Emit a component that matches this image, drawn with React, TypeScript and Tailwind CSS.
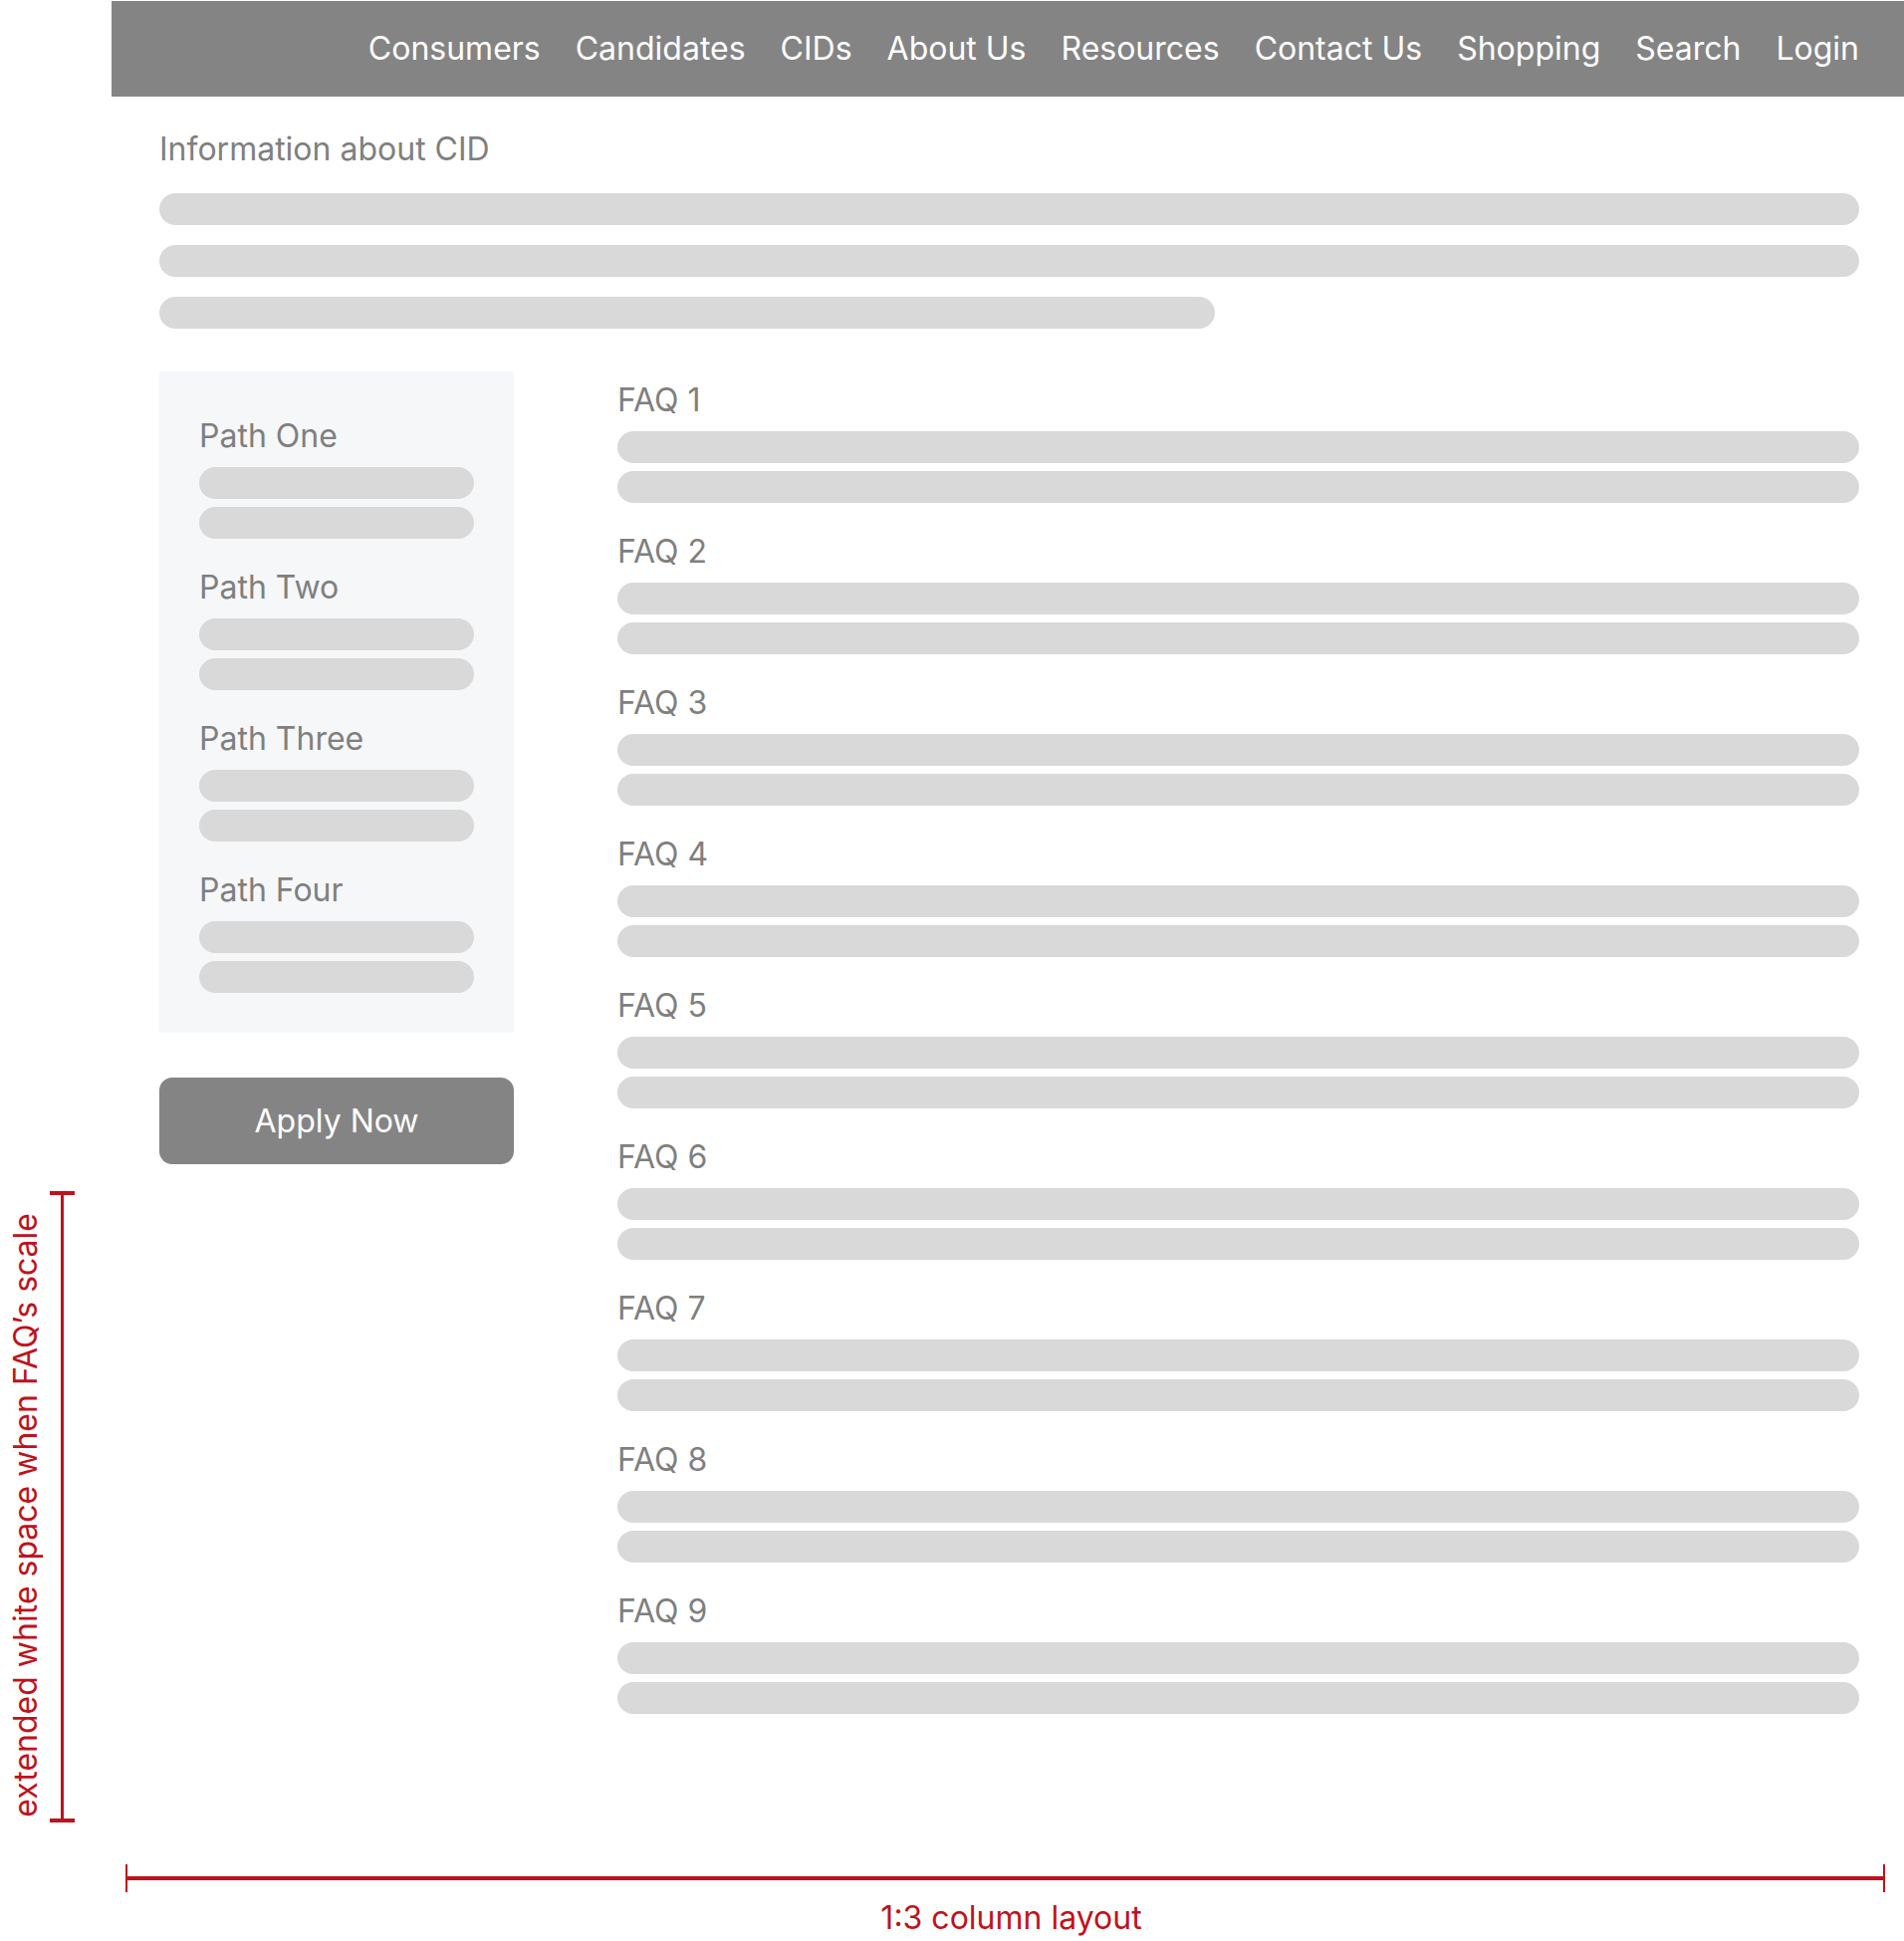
import React from "react";

const navItems = [
  "Consumers",
  "Candidates",
  "CIDs",
  "About Us",
  "Resources",
  "Contact Us",
  "Shopping",
  "Search",
  "Login",
];

const paths = ["Path One", "Path Two", "Path Three", "Path Four"];
const faqs = Array.from({ length: 9 }, (_, i) => `FAQ ${i + 1}`);

function Bar({ className = "" }: { className?: string }) {
  return <div className={`h-[32px] rounded-full bg-[#d9d9d9] ${className}`} />;
}

function Group({ title }: { title: string }) {
  return (
    <div className="flex flex-col">
      <div className="text-[32px] leading-[36px] text-[#7f7f7f]">{title}</div>
      <div className="mt-[13px] flex flex-col gap-[8px]">
        <Bar />
        <Bar />
      </div>
    </div>
  );
}

export default function App() {
  return (
    <div className="flex h-[1949px] w-[1912px] flex-col overflow-hidden bg-white font-['Inter',sans-serif]">
      <div className="flex">
        {/* annotation gutter: vertical bracket */}
        <aside className="w-[112px] shrink-0">
          <div className="mt-[1196px] flex h-[634px] pl-[7px]">
            <div className="flex w-[38px] items-end pb-[5px]">
              <span className="rotate-180 whitespace-nowrap text-[32px] leading-[38px] text-[#c0121c] [writing-mode:vertical-rl]">
                extended white space when FAQ’s scale
              </span>
            </div>
            <div className="ml-[5px] flex w-[25px] flex-col items-center">
              <div className="h-[4px] w-full bg-[#c0121c]" />
              <div className="w-[3px] flex-1 bg-[#c0121c]" />
              <div className="h-[4px] w-full bg-[#c0121c]" />
            </div>
          </div>
        </aside>

        <div className="flex-1">
          <nav className="mt-[1px] flex h-[96px] items-center justify-end gap-[35px] bg-[#848484] pr-[45px]">
            {navItems.map((item) => (
              <a key={item} className="text-[32px] leading-[38px] text-white">
                {item}
              </a>
            ))}
          </nav>

          <main className="pl-[48px] pr-[45px]">
            <h1 className="mt-[35px] text-[32px] font-normal leading-[36px] text-[#7f7f7f]">
              Information about CID
            </h1>
            <div className="mt-[26px] flex flex-col gap-[20px]">
              <Bar />
              <Bar />
              <Bar className="w-[1060px]" />
            </div>

            <div className="mt-[43px] flex items-start gap-[104px]">
              <div className="flex w-[356px] shrink-0 flex-col">
                <div className="flex flex-col gap-[31px] bg-[#f6f7f9] px-[40px] pb-[40px] pt-[47px]">
                  {paths.map((p) => (
                    <Group key={p} title={p} />
                  ))}
                </div>
                <button className="mt-[45px] flex h-[87px] items-center justify-center rounded-[13px] bg-[#848484] text-[32px] leading-[38px] text-white">
                  Apply Now
                </button>
              </div>

              <div className="flex flex-1 flex-col gap-[31px] pt-[11px]">
                {faqs.map((f) => (
                  <Group key={f} title={f} />
                ))}
              </div>
            </div>
          </main>
        </div>
      </div>

      {/* annotation: column layout span */}
      <div className="ml-[126px] mt-[42px] flex w-[1767px] flex-col items-center">
        <div className="flex h-[28px] w-full items-center">
          <div className="h-full w-[2px] bg-[#c0121c]" />
          <div className="h-[4px] flex-1 bg-[#c0121c]" />
          <div className="h-full w-[2px] bg-[#c0121c]" />
        </div>
        <div className="mt-[7px] pl-[12px] text-[32px] leading-[38px] text-[#c0121c]">1:3 column layout</div>
      </div>
    </div>
  );
}
